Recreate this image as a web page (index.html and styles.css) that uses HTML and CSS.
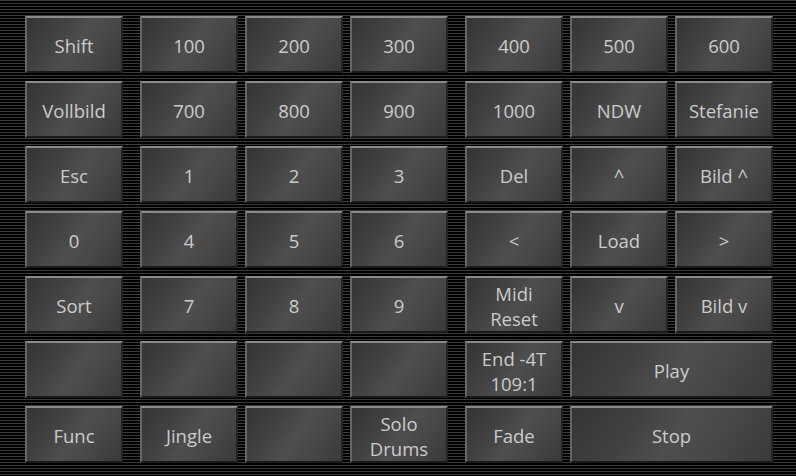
FILE: index.html
```html
<!DOCTYPE html>
<html>
<head>
<meta charset="utf-8">
<link rel="stylesheet" href="styles.css">
</head>
<body>
<div class="pad">
  <div class="group g1">
    <div class="btn">Shift</div>
    <div class="btn">Vollbild</div>
    <div class="btn">Esc</div>
    <div class="btn">0</div>
    <div class="btn">Sort</div>
    <div class="btn"></div>
    <div class="btn">Func</div>
  </div>
  <div class="group g3">
    <div class="btn">100</div><div class="btn">200</div><div class="btn">300</div>
    <div class="btn">700</div><div class="btn">800</div><div class="btn">900</div>
    <div class="btn">1</div><div class="btn">2</div><div class="btn">3</div>
    <div class="btn">4</div><div class="btn">5</div><div class="btn">6</div>
    <div class="btn">7</div><div class="btn">8</div><div class="btn">9</div>
    <div class="btn"></div><div class="btn"></div><div class="btn"></div>
    <div class="btn">Jingle</div><div class="btn"></div><div class="btn">Solo<br>Drums</div>
  </div>
  <div class="group g3">
    <div class="btn">400</div><div class="btn">500</div><div class="btn">600</div>
    <div class="btn">1000</div><div class="btn">NDW</div><div class="btn">Stefanie</div>
    <div class="btn">Del</div><div class="btn">^</div><div class="btn">Bild ^</div>
    <div class="btn">&lt;</div><div class="btn">Load</div><div class="btn">&gt;</div>
    <div class="btn">Midi<br>Reset</div><div class="btn">v</div><div class="btn">Bild v</div>
    <div class="btn">End -4T<br>109:1</div><div class="btn wide">Play</div>
    <div class="btn">Fade</div><div class="btn wide">Stop</div>
  </div>
</div>
</body>
</html>
```
FILE: styles.css
```css
html, body {
  margin: 0;
  padding: 0;
  width: 796px;
  height: 476px;
  overflow: hidden;
}
body {
  background: repeating-linear-gradient(to bottom, #3a3a3a 0 1px, #000 1px 3px);
  font-family: "Open Sans", "Noto Sans", sans-serif;
}
.pad {
  display: flex;
  gap: 17px;
  padding: 16px 0 0 25px;
}
.group {
  display: grid;
  grid-template-rows: repeat(7, 57px);
  row-gap: 8px;
  column-gap: 7px;
}
.g1 { grid-template-columns: 98px; }
.g3 { grid-template-columns: repeat(3, 98px); }
.wide { grid-column: span 2; }
.btn {
  box-sizing: border-box;
  display: flex;
  align-items: center;
  justify-content: center;
  text-align: center;
  color: #cbcbcb;
  font-size: 18.5px;
  line-height: 25px;
  border-top: 2px solid #8a8a8a;
  border-left: 2px solid #666;
  border-right: 2px solid #242424;
  border-bottom: 2px solid #1a1a1a;
  background: linear-gradient(125deg, #343434 0%, #414141 30%, #4e4e4e 52%, #474747 72%, #393939 100%);
  padding-top: 2px;
}
```
